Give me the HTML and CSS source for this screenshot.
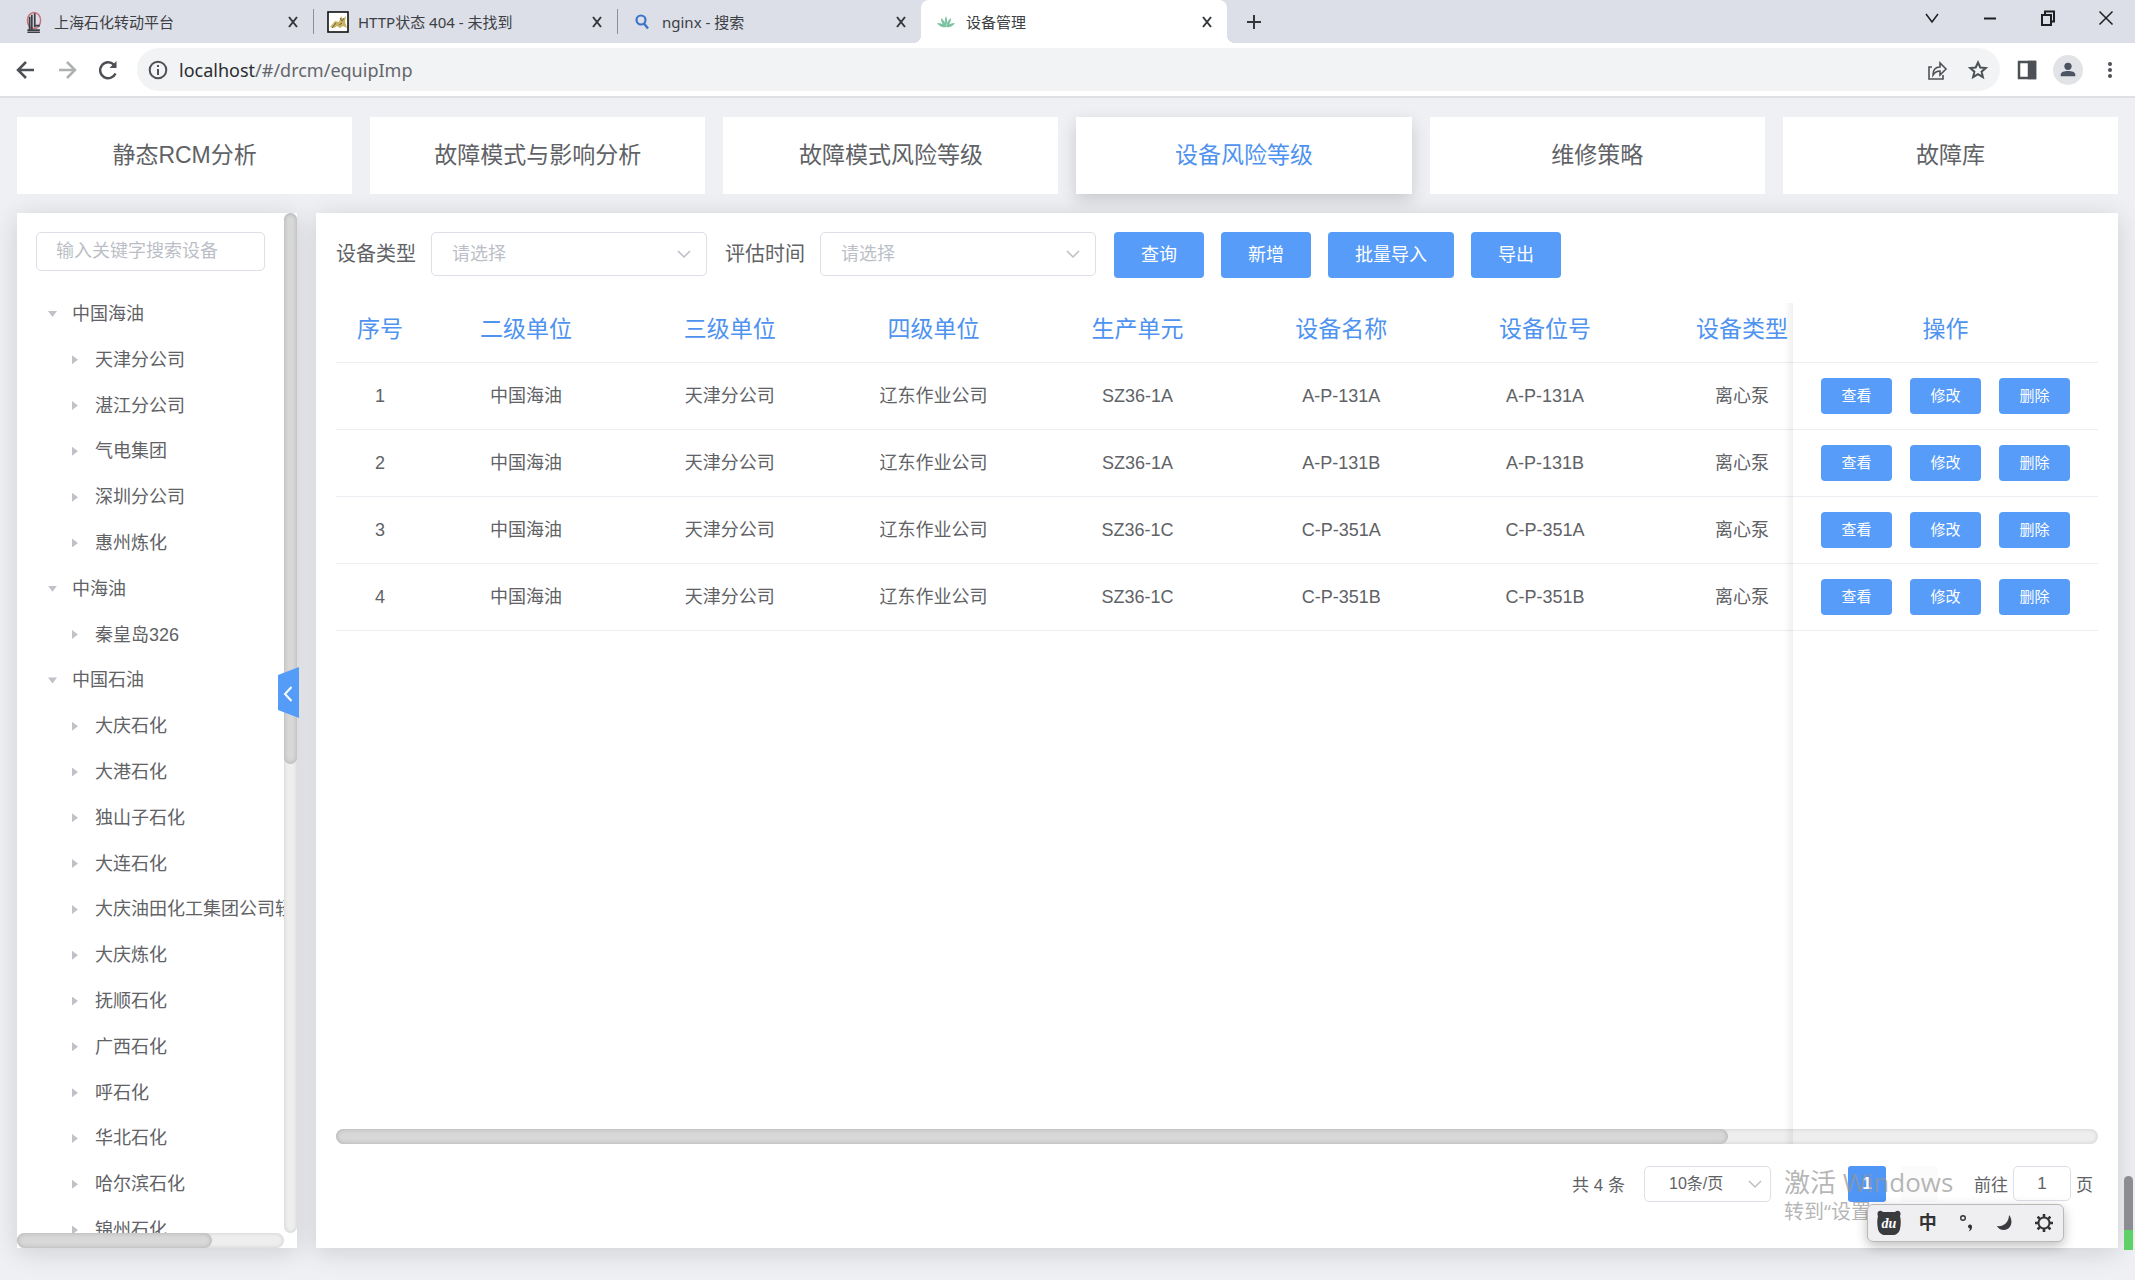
FILE: index.html
```html
<!DOCTYPE html>
<html lang="zh-CN">
<head>
<meta charset="utf-8">
<title>设备管理</title>
<link rel="stylesheet" href="styles.css">
</head>
<body>
<div class="window">
  <header class="tabstrip">
    <div class="tab">
      <svg class="favicon" viewBox="0 0 22 30"><ellipse cx="11" cy="13" rx="9" ry="11" fill="none" stroke="#c9727a" stroke-width="2"/><path d="M5 8v17M8 5v20M12 3v19M2 26h17M2 29h17M13 20h6" stroke="#3d3f45" stroke-width="2.4" fill="none"/></svg>
      <span class="tab-title">上海石化转动平台</span>
      <button class="tab-close" aria-label="关闭"><svg viewBox="0 0 14 14"><path d="M3 2l8 10M11 2L3 12"/></svg></button>
    </div>
    <div class="tab divided">
      <svg class="favicon" viewBox="0 0 22 22"><rect x="1" y="1" width="20" height="20" fill="#fff" stroke="#111" stroke-width="1.6"/><path d="M3 16l5-6 4 1 2-6 2 3 3-3-1 6 2 6-4-2-3 2-3-2-3 2z" fill="#c9b361"/><path d="M5 17l4-5M13 7l2 3 2-3M12 14l3-2" fill="none" stroke="#6b6444" stroke-width="1"/></svg>
      <span class="tab-title">HTTP状态 404 - 未找到</span>
      <button class="tab-close" aria-label="关闭"><svg viewBox="0 0 14 14"><path d="M3 2l8 10M11 2L3 12"/></svg></button>
    </div>
    <div class="tab divided">
      <svg class="favicon" viewBox="0 0 22 22"><circle cx="10" cy="9" r="4.5" fill="none" stroke="#3d76c8" stroke-width="2.2"/><path d="M13 12.500l4 5" stroke="#3d76c8" stroke-width="2.4"/></svg>
      <span class="tab-title">nginx - 搜索</span>
      <button class="tab-close" aria-label="关闭"><svg viewBox="0 0 14 14"><path d="M3 2l8 10M11 2L3 12"/></svg></button>
    </div>
    <div class="tab active">
      <svg class="favicon" viewBox="0 0 22 22"><g fill="#7cc4a4"><path d="M11 16C9 12 10 7 11 5c1 2 2 7 0 11zM11 16C7 14 6 10 6 7c3 2 5 6 5 9zM11 16c4-2 5-6 5-9-3 2-5 6-5 9zM11 16c-4 1-7-1-9-4 4 0 7 1 9 4zM11 16c4 1 7-1 9-4-4 0-7 1-9 4z"/></g></svg>
      <span class="tab-title">设备管理</span>
      <button class="tab-close" aria-label="关闭"><svg viewBox="0 0 14 14"><path d="M3 2l8 10M11 2L3 12"/></svg></button>
    </div>
    <button class="new-tab" aria-label="新标签页"><svg viewBox="0 0 18 18"><path d="M9 2v14M2 9h14"/></svg></button>
    <div class="window-controls">
      <button aria-label="搜索标签页"><svg viewBox="0 0 18 18"><path d="M3 5l6 8 6-8"/></svg></button>
      <button aria-label="最小化"><svg viewBox="0 0 18 18"><path d="M3 9.500h12" stroke-width="2"/></svg></button>
      <button aria-label="还原"><svg viewBox="0 0 18 18"><path d="M3 6h9v10H3zM6 6V2.500h9v10h-3" stroke-width="2"/></svg></button>
      <button aria-label="关闭窗口"><svg viewBox="0 0 18 18"><path d="M2.500 2.500l13 13M15.500 2.500l-13 13"/></svg></button>
    </div>
  </header>

  <div class="toolbar">
    <button class="tool" aria-label="后退"><svg viewBox="0 0 24 24"><path d="M20 12H5M12 4l-8 8 8 8"/></svg></button>
    <button class="tool dim" aria-label="前进"><svg viewBox="0 0 24 24"><path d="M4 12h15M12 4l8 8-8 8"/></svg></button>
    <button class="tool" aria-label="刷新"><svg viewBox="0 0 24 24"><path d="M19.500 15.500A8 8 0 1 1 18 6.800l1.500 2"/><path d="M20.500 3v7h-7z" fill="#4d5156" stroke="none"/></svg></button>
    <div class="omnibox">
      <svg class="info" viewBox="0 0 20 20"><circle cx="10" cy="10" r="8.300"/><path d="M10 9v6M10 5v2"/></svg>
      <span class="url"><b>localhost</b>/#/drcm/equipImp</span>
      <button class="tool small" aria-label="分享"><svg viewBox="0 0 22 22"><path d="M6 8H3v12h14v-4M7 16c0-6 3-8 7-8V4l6 6-6 6v-4c-3 0-5 1-7 4z" stroke-width="1.600"/></svg></button>
      <button class="tool small" aria-label="收藏"><svg viewBox="0 0 22 22"><path d="M11 3.500l2.300 5 5.500.5-4.200 3.700 1.300 5.500-4.900-3-4.900 3 1.300-5.500L3.200 9l5.500-.5z" stroke-width="2"/></svg></button>
    </div>
    <div class="tool-group">
      <button class="tool small" aria-label="侧边栏"><svg viewBox="0 0 22 22"><path d="M3 3h16v16H3z" stroke-width="2.500"/><path d="M13 3h6v16h-6z" fill="#4d5156"/></svg></button>
      <button class="avatar" aria-label="个人资料"><svg viewBox="0 0 22 22"><circle cx="11" cy="7" r="4"/><path d="M3 18v-2c0-3 4-4 8-4s8 1 8 4v2z"/></svg></button>
      <button class="tool small" aria-label="菜单"><svg viewBox="0 0 22 22"><g fill="#4d5156" stroke="none"><circle cx="11" cy="5" r="2"/><circle cx="11" cy="11" r="2"/><circle cx="11" cy="17" r="2"/></g></svg></button>
    </div>
  </div>

  <main class="page">
    <nav class="modules">
      <a href="#static">静态RCM分析</a>
      <a href="#fmea">故障模式与影响分析</a>
      <a href="#mode">故障模式风险等级</a>
      <a href="#equip" class="current">设备风险等级</a>
      <a href="#strategy">维修策略</a>
      <a href="#library">故障库</a>
    </nav>

    <div class="workspace">
      <aside class="sidebar">
        <div class="sidebar-body">
          <input class="search" type="text" placeholder="输入关键字搜索设备" aria-label="输入关键字搜索设备">
          <ul class="tree">
            <li class="open">中国海油</li>
            <li class="leaf">天津分公司</li>
            <li class="leaf">湛江分公司</li>
            <li class="leaf">气电集团</li>
            <li class="leaf">深圳分公司</li>
            <li class="leaf">惠州炼化</li>
            <li class="open">中海油</li>
            <li class="leaf">秦皇岛326</li>
            <li class="open">中国石油</li>
            <li class="leaf">大庆石化</li>
            <li class="leaf">大港石化</li>
            <li class="leaf">独山子石化</li>
            <li class="leaf">大连石化</li>
            <li class="leaf">大庆油田化工集团公司轻</li>
            <li class="leaf">大庆炼化</li>
            <li class="leaf">抚顺石化</li>
            <li class="leaf">广西石化</li>
            <li class="leaf">呼石化</li>
            <li class="leaf">华北石化</li>
            <li class="leaf">哈尔滨石化</li>
            <li class="leaf">锦州石化</li>
          </ul>
        </div>
        <div class="track vertical"><div class="thumb"></div></div>
        <div class="track"><div class="thumb"></div></div>
        <button class="collapse" aria-label="收起"><svg viewBox="0 0 21 51"><path d="M0 8L21 0v51L0 43z" fill="#559cf8"/><path d="M13.500 20L7 27l6.500 7" fill="none" stroke="#fff" stroke-width="2"/></svg></button>
      </aside>

      <section class="panel">
        <form class="filters">
          <div class="field">
            <label for="type">设备类型</label>
            <span class="select"><select id="type"><option>请选择</option></select><svg viewBox="0 0 14 14"><path d="M1 4l6 6 6-6"/></svg></span>
          </div>
          <div class="field">
            <label for="time">评估时间</label>
            <span class="select"><select id="time"><option>请选择</option></select><svg viewBox="0 0 14 14"><path d="M1 4l6 6 6-6"/></svg></span>
          </div>
          <div class="actions">
            <button type="button" class="btn">查询</button>
            <button type="button" class="btn">新增</button>
            <button type="button" class="btn">批量导入</button>
            <button type="button" class="btn">导出</button>
          </div>
        </form>

        <div class="table-area">
          <div class="table-view">
            <table>
              <colgroup><col class="c-index"><col><col><col><col><col><col><col class="c-type"><col class="c-ops"></colgroup>
              <thead>
                <tr><th>序号</th><th>二级单位</th><th>三级单位</th><th>四级单位</th><th>生产单元</th><th>设备名称</th><th>设备位号</th><th>设备类型</th><th class="ops">操作</th></tr>
              </thead>
              <tbody>
                <tr><td>1</td><td>中国海油</td><td>天津分公司</td><td>辽东作业公司</td><td>SZ36-1A</td><td>A-P-131A</td><td>A-P-131A</td><td>离心泵</td><td class="ops"><div class="row-ops"><button class="btn mini">查看</button><button class="btn mini">修改</button><button class="btn mini">删除</button></div></td></tr>
                <tr><td>2</td><td>中国海油</td><td>天津分公司</td><td>辽东作业公司</td><td>SZ36-1A</td><td>A-P-131B</td><td>A-P-131B</td><td>离心泵</td><td class="ops"><div class="row-ops"><button class="btn mini">查看</button><button class="btn mini">修改</button><button class="btn mini">删除</button></div></td></tr>
                <tr><td>3</td><td>中国海油</td><td>天津分公司</td><td>辽东作业公司</td><td>SZ36-1C</td><td>C-P-351A</td><td>C-P-351A</td><td>离心泵</td><td class="ops"><div class="row-ops"><button class="btn mini">查看</button><button class="btn mini">修改</button><button class="btn mini">删除</button></div></td></tr>
                <tr><td>4</td><td>中国海油</td><td>天津分公司</td><td>辽东作业公司</td><td>SZ36-1C</td><td>C-P-351B</td><td>C-P-351B</td><td>离心泵</td><td class="ops"><div class="row-ops"><button class="btn mini">查看</button><button class="btn mini">修改</button><button class="btn mini">删除</button></div></td></tr>
              </tbody>
            </table>
          </div>
          <div class="track"><div class="thumb wide"></div></div>
          <div class="fixed-edge"></div>
        </div>

        <footer class="pager">
          <span>共 4 条</span>
          <span class="select size"><select aria-label="每页条数"><option>10条/页</option></select><svg viewBox="0 0 14 14"><path d="M1 4l6 6 6-6"/></svg></span>
          <div class="pages">
            <button class="page-step" aria-label="上一页"></button>
            <button class="page-no">1</button>
            <button class="page-step" aria-label="下一页"></button>
          </div>
          <div class="jump"><label for="jump">前往</label><input id="jump" type="text" value="1"><span>页</span></div>
        </footer>
      </section>
    </div>
  </main>

  <div class="activation"><p class="activation-title">激活 Windows</p><p>转到“设置</p></div>

  <div class="ime">
    <svg viewBox="0 0 26 26"><path d="M2 6C0 2 4-1 7 2h12c3-3 7 0 5 4 1 4 1 8 0 13-1 4-4 6-7 6H9c-3 0-6-2-7-6-1-5-1-9 0-13z" fill="#3a3b3f"/><text x="13" y="18" text-anchor="middle" class="du">du</text></svg>
    <span>中</span>
    <svg viewBox="0 0 26 26"><circle cx="9" cy="8" r="2.300" fill="none" stroke="#333" stroke-width="1.400"/><path d="M14 16a2 2 0 1 1 4 1c0 2-1 3.500-3.500 4.500 1-1 1.500-2 1.400-3-1 0-1.900-1-1.900-2.500z" fill="#333"/></svg>
    <svg viewBox="0 0 26 26"><path d="M17 5c5 6 2 15-5 15-4 0-6-2-7-4 7 1 12-4 12-11z" fill="#3a3b3f"/></svg>
    <svg viewBox="0 0 26 26"><circle cx="13" cy="13" r="5.500" fill="none" stroke="#333" stroke-width="2"/><path d="M13 4v3M13 19v3M4 13h3M19 13h3M6.600 6.600l2.200 2.200M17.200 17.200l2.200 2.200M6.600 19.400l2.200-2.200M17.200 8.800l2.200-2.200" stroke="#333" stroke-width="2.600"/></svg>
  </div>
  <div class="level"></div>
</div>
</body>
</html>
```
FILE: styles.css
```css
* { box-sizing: border-box; }

body {
  margin: 0;
  font-family: "Liberation Sans", "Noto Sans CJK SC", sans-serif;
  font-size: 18px;
  color: #606266;
}

button, input, select { font: inherit; color: inherit; }
button { border: 0; padding: 0; background: none; }
svg { display: block; flex: none; }
p, ul { margin: 0; padding: 0; }

.window {
  position: relative;
  display: flex;
  flex-direction: column;
  height: 100vh;
  overflow: hidden;
}

/* Browser tabs */
.tabstrip {
  display: flex;
  height: 43px;
  padding-left: 9px;
  background: #dcdfe8;
  font-family: "Noto Sans", "Noto Sans CJK SC", sans-serif;
  font-size: 15px;
  color: #3c4043;
}
.tab {
  position: relative;
  display: flex;
  align-items: center;
  gap: 9px;
  flex: 0 1 304px;
  padding: 0 13px 0 14px;
}
.tab.divided::before {
  content: "";
  position: absolute;
  left: 0;
  top: 9px;
  width: 1px;
  height: 25px;
  background: #8b8f98;
}
.tab.active {
  flex-basis: 306px;
  background: #fff;
  border-radius: 8px 8px 0 0;
}
.tab.active::before, .tab.active::after {
  content: "";
  position: absolute;
  bottom: 0;
  width: 8px;
  height: 8px;
}
.tab.active::before { left: -8px; background: radial-gradient(circle at 0 0, transparent 8px, #fff 8px); }
.tab.active::after { right: -8px; background: radial-gradient(circle at 100% 0, transparent 8px, #fff 8px); }
.favicon { width: 22px; height: 22px; }
.tab-title { flex: 1; line-height: 22px; white-space: nowrap; overflow: hidden; }
.tab-close svg { width: 14px; height: 14px; }
.tab-close svg, .new-tab svg { fill: none; stroke: #33363b; stroke-width: 2; }
.new-tab { width: 54px; }
.new-tab svg { width: 18px; height: 18px; margin: 0 auto; }
.window-controls { display: flex; margin-left: auto; height: 36px; }
.window-controls button { width: 58px; }
.window-controls svg { width: 18px; height: 18px; margin: 0 auto; fill: none; stroke: #1d1f23; stroke-width: 1.5; }

/* Address bar */
.toolbar {
  display: flex;
  align-items: center;
  height: 55px;
  padding: 0 5px;
  background: #fff;
  border-bottom: 2px solid #dfe0e4;
}
.tool { width: 41px; }
.tool svg { width: 24px; height: 24px; margin: 0 auto; fill: none; stroke: #4d5156; stroke-width: 2.5; }
.tool.small svg { width: 22px; height: 22px; }
.tool.dim { opacity: .45; }
.omnibox {
  display: flex;
  align-items: center;
  flex: 1;
  height: 43px;
  margin-left: 9px;
  padding: 0 2px 0 11px;
  border-radius: 22px;
  background: #f2f3f5;
}
.info { width: 20px; height: 20px; fill: none; stroke: #4d5156; stroke-width: 2; }
.url { flex: 1; margin-left: 11px; font-family: "Noto Sans", sans-serif; line-height: 24px; color: #63666b; }
.url b { font-weight: 400; color: #2b2d31; }
.tool-group { display: flex; align-items: center; padding-left: 6px; }
.avatar { width: 30px; height: 30px; margin: 0 6px; border-radius: 50%; background: #e2e3e6; }
.avatar svg { width: 20px; height: 22px; margin: 0 auto; fill: #4c5361; }

/* Page */
.page {
  display: flex;
  flex-direction: column;
  gap: 19px;
  flex: 1;
  min-height: 0;
  padding: 19px 17px 32px;
  background: #eff0f4;
}
.modules { display: grid; grid-template-columns: repeat(6, 1fr); gap: 18px; }
.modules a {
  background: #fff;
  color: #606266;
  font-size: 23px;
  line-height: 77px;
  text-align: center;
  text-decoration: none;
}
.modules .current { color: #4f93f0; box-shadow: 0 6px 16px rgba(0, 0, 0, .16); }

.workspace { display: flex; gap: 19px; flex: 1; min-height: 0; }

/* Scroll bars */
.track {
  height: 15px;
  border-radius: 8px;
  background: #eee;
  box-shadow: inset 0 0 4px rgba(0, 0, 0, .14);
}
.thumb {
  width: 73%;
  height: 100%;
  border-radius: 8px;
  background: #d8d8d8;
  box-shadow: inset 0 0 5px rgba(0, 0, 0, .2);
}
.thumb.wide { width: 79%; }
.track.vertical { height: auto; }
.track.vertical .thumb { width: 100%; height: 54%; }

/* Equipment tree */
.sidebar {
  position: relative;
  display: grid;
  grid-template: minmax(0, 1fr) 15px / minmax(0, 1fr) 13px;
  flex: none;
  width: 280px;
  background: #fff;
  box-shadow: 0 4px 24px rgba(0, 0, 0, .14);
}
.sidebar-body { overflow: hidden; padding: 19px; }
.search {
  display: block;
  width: 100%;
  height: 39px;
  padding: 0 19px;
  border: 1px solid #dcdfe6;
  border-radius: 5px;
  background: #fff;
}
.search::placeholder { color: #bcbfc7; opacity: 1; }
.tree {
  display: grid;
  grid-auto-rows: 1fr;
  height: 962px;
  margin-top: 20px;
  list-style: none;
  white-space: nowrap;
}
.tree li { display: flex; align-items: center; line-height: 26px; }
.tree li::before { content: ""; flex: none; background: #bfc2c8; }
.open { padding-left: 12px; }
.open::before { width: 9px; height: 6px; margin-right: 15px; clip-path: polygon(0 0, 100% 0, 50% 100%); }
.leaf { padding-left: 36px; }
.leaf::before { width: 6px; height: 9px; margin-right: 17px; clip-path: polygon(0 0, 100% 50%, 0 100%); }
.collapse { position: absolute; right: -2px; top: 454px; }
.collapse svg { width: 21px; height: 51px; }

/* Main panel */
.panel {
  display: flex;
  flex-direction: column;
  flex: 1;
  min-width: 0;
  padding: 19px 20px 0;
  background: #fff;
  box-shadow: 0 4px 24px rgba(0, 0, 0, .14);
}
.filters { display: flex; gap: 18px; height: 46px; }
.field { display: flex; gap: 15px; }
.field label { font-size: 20px; line-height: 45px; }
.select { position: relative; width: 276px; height: 44px; }
.select select {
  appearance: none;
  width: 100%;
  height: 100%;
  padding: 0 20px;
  border: 1px solid #dcdfe6;
  border-radius: 5px;
  background: #fff;
  color: #bcbfc7;
}
.select svg {
  position: absolute;
  right: 16px;
  top: 50%;
  width: 14px;
  height: 14px;
  margin-top: -7px;
  fill: none;
  stroke: #bcbfc7;
  stroke-width: 1.5;
  pointer-events: none;
}
.actions { display: flex; gap: 17px; }
.btn {
  padding: 0 27px;
  border-radius: 4px;
  background: #579cf8;
  color: #fff;
  line-height: 46px;
}

.table-area { position: relative; display: flex; flex-direction: column; flex: 1; min-height: 0; margin-top: 25px; }
.table-view { flex: 1; overflow: hidden; }
table {
  table-layout: fixed;
  width: calc(100% + 44px);
  border-collapse: separate;
  border-spacing: 0;
}
.c-index { width: 88px; }
.c-type { width: 190px; }
.c-ops { width: 305px; }
th, td { padding: 0; border-bottom: 1px solid #ebeef2; text-align: center; }
th { height: 60px; padding-bottom: 8px; font-size: 23px; font-weight: 400; line-height: 32px; color: #4f93f0; }
td { height: 67px; line-height: 26px; }
.ops { position: sticky; right: 0; background: #fff; }
.row-ops { display: flex; justify-content: center; gap: 18px; }
.mini { width: 71px; padding: 0; font-size: 15px; line-height: 36px; }
.fixed-edge {
  position: absolute;
  top: 0;
  bottom: 0;
  right: 305px;
  width: 9px;
  background: linear-gradient(to right, rgba(0, 0, 0, 0), rgba(0, 0, 0, .06));
  pointer-events: none;
}

.pager {
  display: flex;
  align-items: center;
  justify-content: flex-end;
  height: 104px;
  padding: 0 5px 25px 0;
  font-size: 17px;
}
.select.size { width: 127px; height: 36px; margin: 0 14px 0 19px; }
.size select { padding: 0 24px; font-size: 16px; color: #606266; }
.size svg { right: 9px; }
.pages { display: flex; gap: 15px; }
.page-step { width: 37px; height: 36px; background: #fbfbfb; border-radius: 3px; }
.page-step:first-child { width: 48px; background: #fff; }
.page-no { width: 38px; height: 36px; border-radius: 3px; background: #4f96f6; color: #fff; font-weight: 700; }
.jump { display: flex; align-items: center; gap: 5px; margin-left: 36px; }
.jump input {
  width: 58px;
  height: 35px;
  border: 1px solid #dcdfe6;
  border-radius: 5px;
  text-align: center;
}

/* Desktop overlays */
.activation {
  position: absolute;
  right: 180px;
  bottom: 54px;
  width: 171px;
  font-family: "Open Sans", "Noto Sans CJK SC", sans-serif;
  font-size: 20px;
  line-height: 28px;
  white-space: nowrap;
  color: rgba(150, 150, 150, .7);
}
.activation-title { font-size: 26px; line-height: 32px; }
.ime {
  position: absolute;
  right: 71px;
  bottom: 38px;
  display: flex;
  align-items: center;
  justify-content: space-between;
  width: 197px;
  height: 38px;
  padding: 0 6px 0 8px;
  border: 1px solid #b9b9bb;
  border-radius: 6px;
  background: #efeff1;
  box-shadow: 0 4px 12px rgba(0, 0, 0, .25);
  color: #333;
  font-weight: 700;
  line-height: 26px;
}
.ime svg { width: 26px; height: 26px; }
.ime span { width: 26px; text-align: center; }
.du { fill: #fff; font: italic 700 14px "Liberation Serif", serif; }
.level {
  position: absolute;
  right: 2px;
  bottom: 30px;
  width: 9px;
  height: 74px;
  border-radius: 5px 5px 0 0;
  background: linear-gradient(#8c8d90 54px, #5fd068 54px);
}
```
